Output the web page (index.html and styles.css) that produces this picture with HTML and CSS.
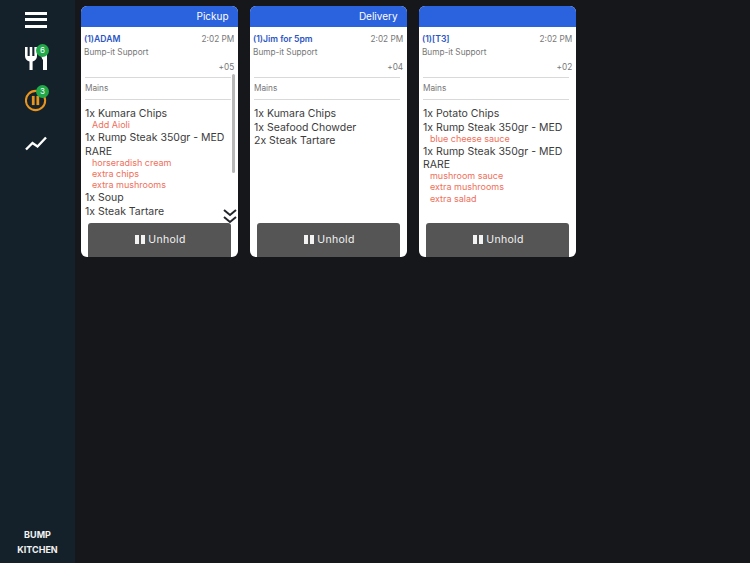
FILE: index.html
```html
<!DOCTYPE html>
<html lang="en">
<head>
  <meta charset="UTF-8" />
  <title>Bump Kitchen</title>
  <link rel="stylesheet" href="styles.css">
</head>
<body>
  <div class="app">
    <nav class="sidebar">
      <div class="menu-icon"><span></span><span></span><span></span></div>

      <div class="nav-item nav-orders">
        <svg width="22" height="24" viewBox="0 0 22 24">
          <path d="M0 0h2.600v9h2.100V0h2.600v9h2.100V0H12v9c0 3-1.800 4.800-4.400 5.400V23H4.500v-8.600C1.800 13.800 0 12 0 9z" fill="#fff"/>
          <path d="M22 3v20h-4V13c-1.300-1.500-2-4-2-8z" fill="#fff"/>
        </svg>
        <span class="badge">6</span>
      </div>

      <div class="nav-item nav-hold">
        <svg width="22" height="25" viewBox="0 0 24 25">
          <circle cx="11.500" cy="12.500" r="10.500" fill="none" stroke="#e8951f" stroke-width="2.200"/>
          <rect x="7.500" y="7.500" width="3" height="10" fill="#e8951f"/>
          <rect x="12.500" y="7.500" width="3" height="10" fill="#e8951f"/>
        </svg>
        <span class="badge">3</span>
      </div>

      <div class="nav-item nav-stats">
        <svg width="22" height="15" viewBox="0 0 22 15">
          <path d="M1 13.500L7.500 7l5 3.500L21 1.500" fill="none" stroke="#fff" stroke-width="2.400"/>
        </svg>
      </div>

      <div class="brand">BUMP<br />KITCHEN</div>
    </nav>

    <main class="tickets">
      <section class="ticket">
        <header class="ticket-head">Pickup</header>
        <div class="ticket-body">
          <div class="ticket-row"><b class="ticket-name">(1)ADAM</b><span>2:02 PM</span></div>
          <div class="ticket-source">Bump-it Support</div>
          <div class="ticket-age">+05</div>
          <div class="ticket-course">Mains</div>
          <div class="ticket-items">
            <p class="item">1x Kumara Chips</p>
            <p class="mod">Add Aioli</p>
            <p class="item">1x Rump Steak 350gr - MED RARE</p>
            <p class="mod">horseradish cream</p>
            <p class="mod">extra chips</p>
            <p class="mod">extra mushrooms</p>
            <p class="item">1x Soup</p>
            <p class="item">1x Steak Tartare</p>
          </div>
        </div>
        <div class="scrollbar"></div>
        <svg class="more" width="14" height="15" viewBox="0 0 14 15">
          <path d="M1 1l6 5 6-5M1 8l6 5 6-5" fill="none" stroke="#23272b" stroke-width="2"/>
        </svg>
        <button class="unhold"><i></i><i></i>Unhold</button>
      </section>

      <section class="ticket">
        <header class="ticket-head">Delivery</header>
        <div class="ticket-body">
          <div class="ticket-row"><b class="ticket-name">(1)Jim for 5pm</b><span>2:02 PM</span></div>
          <div class="ticket-source">Bump-it Support</div>
          <div class="ticket-age">+04</div>
          <div class="ticket-course">Mains</div>
          <div class="ticket-items">
            <p class="item">1x Kumara Chips</p>
            <p class="item">1x Seafood Chowder</p>
            <p class="item">2x Steak Tartare</p>
          </div>
        </div>
        <button class="unhold"><i></i><i></i>Unhold</button>
      </section>

      <section class="ticket">
        <header class="ticket-head"></header>
        <div class="ticket-body">
          <div class="ticket-row"><b class="ticket-name">(1)[T3]</b><span>2:02 PM</span></div>
          <div class="ticket-source">Bump-it Support</div>
          <div class="ticket-age">+02</div>
          <div class="ticket-course">Mains</div>
          <div class="ticket-items">
            <p class="item">1x Potato Chips</p>
            <p class="item">1x Rump Steak 350gr - MED</p>
            <p class="mod">blue cheese sauce</p>
            <p class="item">1x Rump Steak 350gr - MED RARE</p>
            <p class="mod">mushroom sauce</p>
            <p class="mod">extra mushrooms</p>
            <p class="mod">extra salad</p>
          </div>
        </div>
        <button class="unhold"><i></i><i></i>Unhold</button>
      </section>
    </main>
  </div>
</body>
</html>
```

FILE: styles.css
```css
body {
  margin: 0;
  background: #15171b;
  font-family: Inter, "Liberation Sans", sans-serif;
  overflow: hidden;
}

.app {
  display: flex;
  height: 563px;
}

.sidebar {
  width: 75px;
  background: #14212a;
  display: flex;
  flex-direction: column;
  align-items: center;
  box-sizing: border-box;
  padding-top: 11.500px;
}

.menu-icon {
  width: 22px;
  display: flex;
  flex-direction: column;
  gap: 3.500px;
  margin: 0 3px 19.500px 0;
}

.menu-icon span {
  height: 3px;
  background: #fff;
}

.nav-item {
  position: relative;
  width: 22px;
  margin-right: 3px;
}

.nav-orders {
  height: 24px;
  margin-bottom: 17px;
}

.nav-hold {
  height: 25px;
  margin-bottom: 23px;
}

.nav-stats {
  height: 15px;
}

.nav-item svg {
  display: block;
}

.badge {
  position: absolute;
  top: -3px;
  left: 11px;
  width: 13px;
  height: 13px;
  border-radius: 50%;
  background: #21a849;
  color: #fff;
  font-size: 8px;
  line-height: 13px;
  text-align: center;
}

.brand {
  margin-top: auto;
  margin-bottom: 6px;
  color: #f2f2f2;
  font-size: 9px;
  font-weight: 700;
  line-height: 14.500px;
  text-align: center;
}

.tickets {
  display: flex;
  align-items: flex-start;
  gap: 12.400px;
  padding: 6px;
}

.ticket {
  position: relative;
  width: 156.600px;
  height: 251px;
  background: #fff;
  border-radius: 6px;
  overflow: hidden;
  display: flex;
  flex-direction: column;
}

.ticket-head {
  height: 21px;
  flex: none;
  background: #2b62dd;
  color: #fff;
  font-size: 10px;
  line-height: 21px;
  text-align: right;
  padding-right: 9px;
}

.ticket-body {
  flex: 1;
  min-height: 0;
  overflow: hidden;
  padding: 6px 3.400px 0 3px;
  color: #777;
  font-size: 8.250px;
}

.ticket-row {
  display: flex;
  justify-content: space-between;
  line-height: 13px;
}

.ticket-name {
  color: #2b55c4;
  font-size: 8.600px;
  font-weight: 600;
}

.ticket-source {
  margin-top: 1px;
  line-height: 11px;
}

.ticket-age {
  text-align: right;
  line-height: 12px;
  margin-top: 3px;
  padding-bottom: 4px;
}

.ticket-course {
  margin: 0 3px 0 1px;
  border-top: 1px solid #d9d9d9;
  border-bottom: 1px solid #d9d9d9;
  height: 21px;
  line-height: 21px;
}

.ticket-items {
  margin: 7px 3px 0 1px;
}

.item {
  margin: 0;
  color: #3c3c3c;
  font-size: 10.500px;
  line-height: 13.500px;
}

.mod {
  margin: 0;
  padding-left: 7px;
  color: #ef6f5a;
  font-size: 9px;
  line-height: 11.300px;
}

.item + .mod {
  margin-top: -1.400px;
}

.mod + .item {
  margin-top: .6px;
}

.scrollbar {
  position: absolute;
  top: 68px;
  right: 3px;
  width: 3px;
  height: 99px;
  border-radius: 2px;
  background: #b8b8b8;
}

.more {
  position: absolute;
  right: 1px;
  top: 203px;
}

.unhold {
  position: absolute;
  left: 7px;
  bottom: 0;
  width: 143px;
  height: 34px;
  border: 0;
  border-radius: 3px 3px 0 0;
  background: #555;
  color: #f2f2f2;
  font-family: inherit;
  font-size: 10.500px;
  letter-spacing: .3px;
  padding: 0 0 1px 2px;
  display: flex;
  align-items: center;
  justify-content: center;
}

.unhold i {
  width: 4px;
  height: 9.500px;
  background: #f2f2f2;
  margin-right: 1.500px;
}

.unhold i + i {
  margin-right: 3.500px;
}
```
